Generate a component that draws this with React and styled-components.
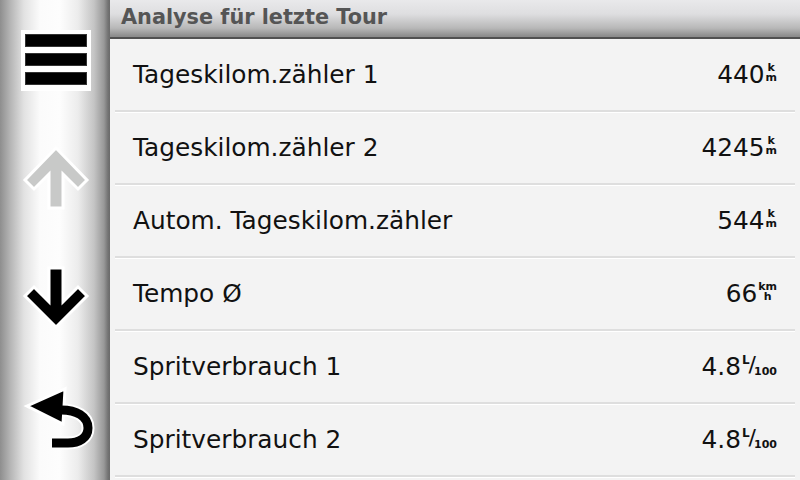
import React from "react";
import styled, { createGlobalStyle } from "styled-components";

const ROWS = [
  { label: "Tageskilom.zähler 1", value: "440", unit: "km" },
  { label: "Tageskilom.zähler 2", value: "4245", unit: "km" },
  { label: "Autom. Tageskilom.zähler", value: "544", unit: "km" },
  { label: "Tempo Ø", value: "66", unit: "kmh" },
  { label: "Spritverbrauch 1", value: "4.8", unit: "l100" },
  { label: "Spritverbrauch 2", value: "4.8", unit: "l100" },
];

export default function App() {
  return (
    <>
      <GlobalStyle />
      <Screen>
        <Sidebar>
          <SideButton>
            <MenuBox>
              <MenuBar />
              <MenuBar />
              <MenuBar />
            </MenuBox>
          </SideButton>
          <SideButton>
            <svg width="110" height="120" viewBox="0 0 110 120">
              <path
                d="M56 28 L87 60 L78 69 L63 54 L63 88 L49 88 L49 54 L34 69 L25 60 Z"
                fill="#c8c9c8"
                stroke="#fff"
                strokeWidth="3"
              />
            </svg>
          </SideButton>
          <SideButton>
            <svg width="110" height="120" viewBox="0 0 110 120">
              <path
                d="M49 28 L63 28 L63 62 L78 47 L87 56 L56 87 L25 56 L34 47 L49 62 Z"
                fill="#000"
                stroke="#fff"
                strokeWidth="3"
              />
            </svg>
          </SideButton>
          <SideButton>
            <svg width="110" height="120" viewBox="0 0 110 120">
              <g transform="translate(0,-360)">
                <path
                  d="M58 410 C77 409 88 417 88 428 C88 438 79 443 68 443 L52 443"
                  fill="none"
                  stroke="#fff"
                  strokeWidth="13"
                />
                <path
                  d="M27 406 L65 389 L63 424 Z"
                  fill="#000"
                  stroke="#fff"
                  strokeWidth="3"
                />
                <path
                  d="M58 410 C77 409 88 417 88 428 C88 438 79 443 68 443 L52 443"
                  fill="none"
                  stroke="#000"
                  strokeWidth="9"
                />
              </g>
            </svg>
          </SideButton>
        </Sidebar>
        <Main>
          <Header>Analyse für letzte Tour</Header>
          <List>
            {ROWS.map((r) => (
              <Row key={r.label}>
                <Label>{r.label}</Label>
                <Value>
                  {r.value}
                  <Unit kind={r.unit} />
                </Value>
              </Row>
            ))}
          </List>
        </Main>
      </Screen>
    </>
  );
}

function Unit({ kind }) {
  if (kind === "l100") {
    return (
      <Frac>
        <Sup>L</Sup>
        <Slash>/</Slash>
        <Sub>100</Sub>
      </Frac>
    );
  }
  return (
    <Stack>
      <span>{kind === "kmh" ? "km" : "k"}</span>
      <span>{kind === "kmh" ? "h" : "m"}</span>
    </Stack>
  );
}

const GlobalStyle = createGlobalStyle`
  html, body {
    margin: 0;
    padding: 0;
    background: #f3f3f3;
  }
  body {
    font-family: "DejaVu Sans", "Liberation Sans", sans-serif;
  }
`;

const Screen = styled.div`
  width: 800px;
  height: 480px;
  display: flex;
  overflow: hidden;
  background: #f3f3f3;
`;

const Sidebar = styled.div`
  width: 110px;
  flex-shrink: 0;
  display: flex;
  flex-direction: column;
  background: linear-gradient(
    to right,
    #8e8e8e 0px,
    #b4b4b4 10px,
    #e2e2e2 24px,
    #fbfbfb 40px,
    #fdfdfd 60px,
    #ececec 78px,
    #c4c4c4 94px,
    #989898 104px,
    #737373 108px,
    #6a6a6a 110px
  );
`;

const SideButton = styled.div`
  height: 120px;
  display: flex;
  align-items: center;
  justify-content: center;
`;

const MenuBox = styled.div`
  width: 62px;
  padding: 4px 4px 6px;
  margin-left: 2px;
  background: #fff;
  display: flex;
  flex-direction: column;
  gap: 6px;
`;

const MenuBar = styled.div`
  height: 13px;
  background: #000;
  border: 1px solid #333;
  box-sizing: border-box;
`;

const Main = styled.div`
  flex: 1;
  display: flex;
  flex-direction: column;
`;

const Header = styled.div`
  height: 39px;
  box-sizing: border-box;
  padding: 0 0 3px 11px;
  display: flex;
  align-items: center;
  font-size: 20.8px;
  font-weight: bold;
  color: #555;
  background: linear-gradient(to bottom, #e9e9eb 0px, #dedee0 14px, #b8b8b8 28px, #8c8c8c 36px);
  border-bottom: 2px solid #505050;
`;

const List = styled.div`
  display: flex;
  flex-direction: column;
  padding: 0 5px;
`;

const Row = styled.div`
  height: 71px;
  flex-shrink: 0;
  display: flex;
  align-items: center;
  justify-content: space-between;
  padding: 0 18px;
  border-bottom: 2px solid #dedede;
  box-shadow: 0 1px 0 #fff;
`;

const Label = styled.div`
  font-size: 24.8px;
  color: #111;
`;

const Value = styled.div`
  font-size: 24.8px;
  color: #111;
  display: flex;
  align-items: center;
`;

const Stack = styled.span`
  display: inline-flex;
  flex-direction: column;
  align-items: center;
  font-size: 11px;
  font-weight: bold;
  line-height: 10px;
  margin-left: 1px;
  margin-top: -4px;
`;

const Frac = styled.span`
  display: inline-flex;
  align-items: flex-start;
  font-weight: bold;
  margin-left: 1px;
`;

const Sup = styled.span`
  font-size: 12px;
  line-height: 12px;
  margin-top: -2px;
`;

const Slash = styled.span`
  font-size: 22px;
  font-weight: normal;
  line-height: 22px;
  margin: -2px -2px 0 -1px;
`;

const Sub = styled.span`
  font-size: 11px;
  line-height: 11px;
  margin-top: 10px;
`;
